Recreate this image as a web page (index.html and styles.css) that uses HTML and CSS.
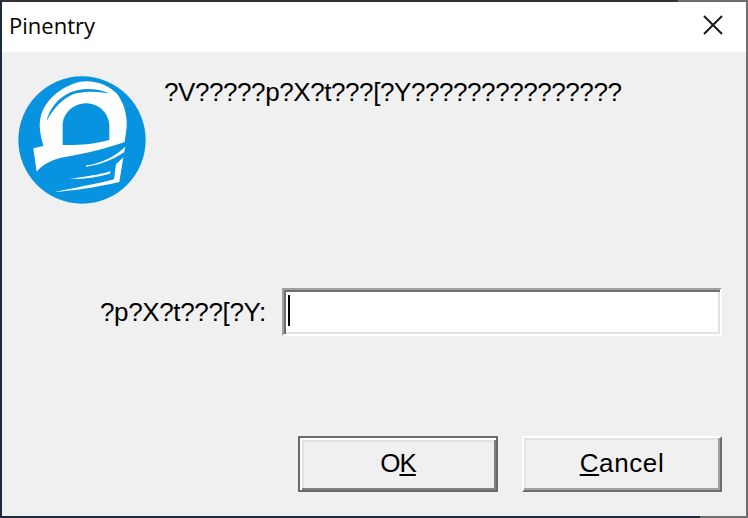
FILE: index.html
```html
<!DOCTYPE html>
<html lang="en">
<head>
<meta charset="utf-8">
<title>Pinentry</title>
<link rel="stylesheet" href="styles.css">
</head>
<body>
<div class="window">
  <header class="titlebar">
    <span class="title">Pinentry</span>
    <svg class="close" width="20" height="20" viewBox="0 0 20 20"><path d="M1 1 L19 19 M19 1 L1 19" stroke="#1a1a1a" stroke-width="2" fill="none"/></svg>
  </header>
  <main class="content">
    <section class="top">
      <svg class="logo" width="128" height="128" viewBox="54 48 384 384">
        <circle cx="246" cy="240" r="191" fill="#0793e0"/>
        <path d="M110 335 L100 265 L130 258 C122 225 115 200 122 170 C135 120 180 80 240 65 C285 58 325 75 350 100 C372 130 382 165 380 200 C378 220 375 235 374 246 C330 262 260 280 190 292 C150 300 125 318 110 335 Z" fill="#fff"/>
        <path d="M140 183 C150 140 185 100 235 90 C265 84 300 88 328 100 C295 95 262 92 228 100 C190 112 160 145 140 183 Z" fill="#0793e0"/>
        <path d="M188 255 L188 190 C192 155 225 130 260 130 C298 132 326 160 328 195 L328 240 C285 252 235 256 188 255 Z" fill="#0793e0"/>
        <path d="M258 316 C300 312 345 290 376 260 L373 276 C340 298 300 315 258 320 Z" fill="#fff"/>
        <path d="M208 357 C250 350 300 345 332 333 L330 341 C290 352 250 358 208 357 Z" fill="#fff"/>
        <path d="M163 396 C220 384 290 372 342 358 L348 313 L370 292 L358 366 C290 382 220 392 163 396 Z" fill="#fff"/>
      </svg>
      <p class="message">?V?????p?X?t???[?Y???????????????</p>
    </section>
    <section class="entry">
      <label class="label" for="pw">?p?X?t???[?Y:</label>
      <div class="field" id="pw"><span class="caret"></span></div>
    </section>
    <section class="actions">
      <button class="btn btn-default"><span class="ok">O<u>K</u></span></button>
      <button class="btn"><span class="cancel"><u>C</u>ancel</span></button>
    </section>
  </main>
</div>
</body>
</html>
```
FILE: styles.css
```css
html, body { margin: 0; padding: 0; }
body {
  width: 748px; height: 518px; overflow: hidden; padding: 2px; box-sizing: border-box;
  background:
    linear-gradient(#6f6f6f, #6f6f6f) right top / 2px 100% no-repeat,
    linear-gradient(to right, #2f3338 678px, #6f6f6f 678px) left top / 100% 2px no-repeat,
    linear-gradient(to right, #1c2a3e 700px, #6f6f6f 700px) left bottom / 100% 2px no-repeat,
    #1c2a3e;
}
.window {
  width: 744px; height: 514px;
  display: flex; flex-direction: column;
  font-family: "Liberation Sans", Arial, sans-serif;
  color: #000;
}
.titlebar {
  height: 50px; background: #fff; display: flex; align-items: center;
  justify-content: space-between; padding: 0 23px 4px 7px; box-sizing: border-box; flex: none;
}
.title { font-family: "Open Sans", "Noto Sans", sans-serif; font-size: 22px; color: #000; }
.close { display: block; }
.content { flex: 1; background: #f0f0f0; display: flex; flex-direction: column; }
.top { display: flex; height: 236px; padding: 24px 0 0 16px; box-sizing: border-box; }
.logo { flex: none; }
.message { margin: 0 0 0 18px; font-size: 26px; line-height: 32px; letter-spacing: -0.42px; }
.entry { display: flex; align-items: center; height: 48px; }
.label { width: 264px; text-align: right; font-size: 26px; letter-spacing: -0.35px; flex: none; }
.field {
  width: 440px; height: 48px; box-sizing: border-box; margin-left: 16px;
  background: #fff;
  border: 2px solid; border-color: #a0a0a0 #fff #fff #a0a0a0;
  box-shadow: inset 2px 2px 0 #6f6f6f, inset -2px -2px 0 #e3e3e3;
  padding: 5px 0 0 4px;
}
.caret { display: block; width: 2px; height: 31px; background: #000; }
.actions { display: flex; gap: 24px; margin-top: 100px; padding-left: 296px; }
.btn {
  width: 200px; height: 56px; padding: 0 0 2px; background: #f0f0f0; box-sizing: border-box;
  border: 2px solid; border-color: #fff #6f6f6f #6f6f6f #fff;
  box-shadow: inset -2px -2px 0 #a0a0a0, inset 2px 2px 0 #e3e3e3;
  font: 26px "Liberation Sans", Arial, sans-serif; color: #000;
}
.btn-default {
  border-color: #6a6a6a;
  box-shadow: inset 2px 2px 0 #fff, inset -2px -2px 0 #808080, inset 4px 4px 0 #e3e3e3;
}
.ok { letter-spacing: -1px; }
.cancel { letter-spacing: 0.6px; }
```
